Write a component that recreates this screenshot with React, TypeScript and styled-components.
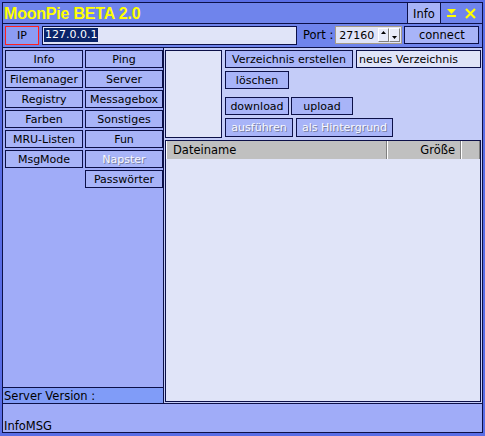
import React from "react";
import styled, { createGlobalStyle } from "styled-components";

const GlobalStyle = createGlobalStyle`
  html, body {
    margin: 0;
    padding: 0;
    background: #5a6ee6;
  }
  * {
    box-sizing: border-box;
  }
`;

const DARK = "#0c1048";

const Window = styled.div`
  width: 485px;
  height: 436px;
  padding: 2px 2px 3px 2px;
  background: #5a6ee6;
  font-family: "DejaVu Sans", Verdana, sans-serif;
  font-size: 11px;
  color: #000;
`;

const Frame = styled.div`
  height: 100%;
  border: 1px solid ${DARK};
  display: flex;
  flex-direction: column;
`;

const TitleBar = styled.div`
  height: 21px;
  flex-shrink: 0;
  display: flex;
  align-items: stretch;
  background: #6f84ec;
  border-bottom: 1px solid ${DARK};
`;

const Title = styled.div`
  flex: 1;
  padding: 2px 0 0 1px;
  font-family: "Liberation Sans", Arial, sans-serif;
  font-weight: bold;
  font-size: 16px;
  color: #ffff00;
  letter-spacing: -0.2px;
`;

const InfoTab = styled.div`
  width: 34px;
  display: flex;
  align-items: center;
  justify-content: center;
  background: #a8b4f8;
  border-left: 1px solid ${DARK};
  border-right: 1px solid ${DARK};
  padding-top: 2px;
  font-size: 11.5px;
`;

const Controls = styled.div`
  width: 41px;
  display: flex;
  align-items: center;
  gap: 9px;
  padding-left: 6px;
`;

const AddressRow = styled.div`
  height: 24px;
  flex-shrink: 0;
  display: flex;
  align-items: center;
  padding: 0 2px 1px 2px;
  background: #6f84ec;
  border-bottom: 1px solid ${DARK};
  white-space: nowrap;
  & > * {
    flex-shrink: 0;
  }
`;

const Button = styled.div<{ $w?: number; $h?: number; $disabled?: boolean }>`
  width: ${(p) => (p.$w ? `${p.$w}px` : "auto")};
  height: ${(p) => p.$h ?? 18}px;
  display: flex;
  align-items: center;
  justify-content: center;
  background: #a8b4f8;
  border: 1px solid ${DARK};
  white-space: nowrap;
  color: ${(p) => (p.$disabled ? "#f8f8ff" : "#000")};
  text-shadow: ${(p) => (p.$disabled ? "1px 1px 0 #7880a0" : "none")};
`;

const IpButton = styled(Button)`
  background: #8c9cf4;
  border-color: #ff2020;
`;

const Field = styled.div<{ $w: number }>`
  width: ${(p) => p.$w}px;
  height: 19px;
  display: flex;
  align-items: center;
  padding-left: 1px;
  background: #e0e4f8;
  border: 1px solid ${DARK};
  white-space: nowrap;
`;

const Selected = styled.span`
  background: #0a246a;
  color: #fff;
  padding: 0 1px;
  line-height: 14px;
`;

const PortLabel = styled.span`
  margin: 0 2px 0 6px;
  font-size: 11.5px;
`;

const Spinner = styled.div`
  width: 67px;
  height: 18px;
  display: flex;
  align-items: center;
  padding: 1px 1px 1px 3px;
  background: #e0e4f8;
  border: 1px solid #a89c88;
`;

const SpinText = styled.span`
  flex: 1;
`;

const SpinButton = styled.div<{ $up?: boolean }>`
  width: 11px;
  height: 14px;
  display: flex;
  justify-content: center;
  align-items: ${(p) => (p.$up ? "flex-start" : "flex-end")};
  padding: 2px 0;
  background: #e8ecfa;
  border-top: 1px solid #fff;
  border-left: 1px solid #fff;
  border-right: 1px solid #808080;
  border-bottom: 1px solid #808080;
`;

const Main = styled.div`
  flex: 1;
  display: flex;
  border-bottom: 1px solid ${DARK};
  min-height: 0;
`;

const LeftPanel = styled.div`
  width: 163px;
  display: flex;
  flex-direction: column;
  background: #a0acf8;
  border-right: 1px solid ${DARK};
`;

const MenuGrid = styled.div`
  display: grid;
  grid-template-columns: 78px 78px;
  grid-auto-rows: 18px;
  gap: 2px;
  padding: 2px 0 0 2px;
`;

const Spacer = styled.div`
  flex: 1;
`;

const ServerVersion = styled.div`
  height: 16px;
  padding-left: 1px;
  display: flex;
  align-items: center;
  background: #809cf8;
  border-top: 1px solid ${DARK};
  font-size: 11.5px;
`;

const RightPanel = styled.div`
  flex: 1;
  display: flex;
  flex-direction: column;
  padding: 2px 1px 1px 1px;
  background: #c4ccf8;
`;

const TopArea = styled.div`
  display: flex;
  gap: 3px;
`;

const Preview = styled.div`
  width: 57px;
  height: 88px;
  background: #e0e4f8;
  border: 1px solid ${DARK};
`;

const ActionColumn = styled.div`
  display: flex;
  flex-direction: column;
`;

const ActionRow = styled.div<{ $mt?: number }>`
  display: flex;
  gap: 3px;
  margin-top: ${(p) => p.$mt ?? 0}px;
`;

const FileList = styled.div`
  flex: 1;
  margin-top: 2px;
  display: flex;
  flex-direction: column;
  background: #e0e4f8;
  border: 1px solid ${DARK};
`;

const ListHeader = styled.div`
  height: 18px;
  display: flex;
  background: #c0c0c0;
`;

const HeaderCell = styled.div<{ $w?: number; $right?: boolean }>`
  width: ${(p) => (p.$w ? `${p.$w}px` : "auto")};
  flex: ${(p) => (p.$w ? "none" : 1)};
  display: flex;
  align-items: center;
  justify-content: ${(p) => (p.$right ? "flex-end" : "flex-start")};
  padding: 0 5px 0 6px;
  border-left: 1px solid #fff;
  border-right: 1px solid #808080;
  font-size: 11.5px;
`;

const StatusBar = styled.div`
  height: 28px;
  flex-shrink: 0;
  display: flex;
  align-items: flex-end;
  padding: 0 0 0 1px;
  background: #a0acf8;
  line-height: 12px;
  font-size: 11.5px;
`;

const leftMenu: [string, string, boolean?][] = [
  ["Info", "Ping"],
  ["Filemanager", "Server"],
  ["Registry", "Messagebox"],
  ["Farben", "Sonstiges"],
  ["MRU-Listen", "Fun"],
  ["MsgMode", "Napster", true],
];

export default function App() {
  return (
    <Window>
      <GlobalStyle />
      <Frame>
        <TitleBar>
          <Title>MoonPie BETA 2.0</Title>
          <InfoTab>Info</InfoTab>
          <Controls>
            <svg width="9" height="10" viewBox="0 0 9 10">
              <polygon points="0,1 9,1 4.5,6" fill="#ffff00" />
              <rect x="0" y="7" width="9" height="2" fill="#ffff00" />
            </svg>
            <svg width="11" height="11" viewBox="0 0 11 11">
              <path d="M1 1 L10 10 M10 1 L1 10" stroke="#ffff00" strokeWidth="2.2" />
            </svg>
          </Controls>
        </TitleBar>

        <AddressRow>
          <IpButton $w={34} $h={19}>
            IP
          </IpButton>
          <Field $w={255} style={{ marginLeft: 3 }}>
            <Selected>127.0.0.1</Selected>
          </Field>
          <PortLabel>Port :</PortLabel>
          <Spinner>
            <SpinText>27160</SpinText>
            <SpinButton $up>
              <svg width="5" height="3" viewBox="0 0 5 3">
                <polygon points="2.5,0 5,3 0,3" fill="#000" />
              </svg>
            </SpinButton>
            <SpinButton>
              <svg width="5" height="3" viewBox="0 0 5 3">
                <polygon points="0,0 5,0 2.5,3" fill="#000" />
              </svg>
            </SpinButton>
          </Spinner>
          <Button $w={75} style={{ marginLeft: 2, fontSize: 11.5 }}>
            connect
          </Button>
        </AddressRow>

        <Main>
          <LeftPanel>
            <MenuGrid>
              {leftMenu.map(([a, b, dis]) => (
                <React.Fragment key={a}>
                  <Button>{a}</Button>
                  <Button $disabled={dis}>{b}</Button>
                </React.Fragment>
              ))}
              <span />
              <Button>Passwörter</Button>
            </MenuGrid>
            <Spacer />
            <ServerVersion>Server Version :</ServerVersion>
          </LeftPanel>

          <RightPanel>
            <TopArea>
              <Preview />
              <ActionColumn>
                <ActionRow>
                  <Button $w={128}>Verzeichnis erstellen</Button>
                  <Field $w={125} style={{ height: 18, paddingLeft: 2 }}>
                    neues Verzeichnis
                  </Field>
                </ActionRow>
                <ActionRow $mt={3}>
                  <Button $w={64}>löschen</Button>
                </ActionRow>
                <ActionRow $mt={8}>
                  <Button $w={64}>download</Button>
                  <Button $w={62} style={{ marginLeft: -1 }}>
                    upload
                  </Button>
                </ActionRow>
                <ActionRow $mt={3}>
                  <Button $w={68} $h={19} $disabled>
                    ausführen
                  </Button>
                  <Button $w={97} $h={19} $disabled>
                    als Hintergrund
                  </Button>
                </ActionRow>
              </ActionColumn>
            </TopArea>

            <FileList>
              <ListHeader>
                <HeaderCell $w={221}>Dateiname</HeaderCell>
                <HeaderCell $w={74} $right>
                  Größe
                </HeaderCell>
                <HeaderCell />
              </ListHeader>
            </FileList>
          </RightPanel>
        </Main>

        <StatusBar>InfoMSG</StatusBar>
      </Frame>
    </Window>
  );
}
